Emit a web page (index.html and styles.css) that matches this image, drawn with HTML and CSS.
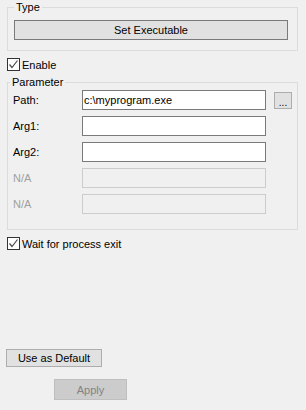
FILE: index.html
```html
<!DOCTYPE html>
<html lang="en">
<head>
  <meta charset="UTF-8">
  <meta name="viewport" content="width=device-width, initial-scale=1.0">
  <title>Run Program</title>
  <link rel="stylesheet" href="styles.css">
</head>
<body>
  <fieldset class="group type-group">
    <legend>Type</legend>
    <button class="btn btn-set">Set Executable</button>
  </fieldset>

  <label class="check check-enable">
    <span class="box"><svg width="11" height="11" viewBox="0 0 11 11"><polyline points="1.5,5.5 4,8.5 9.5,1.5" fill="none" stroke="#4a4a4a" stroke-width="1.2"/></svg></span>
    Enable
  </label>

  <fieldset class="group param-group">
    <legend>Parameter</legend>
    <div class="row">
      <span class="label">Path:</span>
      <input class="field" type="text" value="c:\myprogram.exe">
      <button class="btn btn-browse">...</button>
    </div>
    <div class="row">
      <span class="label">Arg1:</span>
      <input class="field" type="text">
    </div>
    <div class="row">
      <span class="label">Arg2:</span>
      <input class="field" type="text">
    </div>
    <div class="row disabled">
      <span class="label">N/A</span>
      <input class="field" type="text" disabled>
    </div>
    <div class="row disabled">
      <span class="label">N/A</span>
      <input class="field" type="text" disabled>
    </div>
  </fieldset>

  <label class="check check-wait">
    <span class="box"><svg width="11" height="11" viewBox="0 0 11 11"><polyline points="1.5,5.5 4,8.5 9.5,1.5" fill="none" stroke="#4a4a4a" stroke-width="1.2"/></svg></span>
    Wait for process exit
  </label>

  <div class="footer">
    <button class="btn btn-default">Use as Default</button>
    <button class="btn btn-apply" disabled>Apply</button>
  </div>
</body>
</html>
```

FILE: styles.css
```css
body {
  margin: 0;
  padding: 0 0 0 7px;
  width: 306px;
  height: 410px;
  box-sizing: border-box;
  background: #f0f0f0;
  font-family: "Liberation Sans", Arial, sans-serif;
  font-size: 11px;
  color: #000;
}
.group {
  width: 291px;
  box-sizing: border-box;
  margin: 0;
  border: 1px solid #dcdcdc;
}
.group legend {
  line-height: 14px;
  padding: 0 2px;
}
.type-group {
  padding: 0 9px 10px 6px;
}
.param-group {
  margin-top: 4px;
  padding: 1px 0 15px 5px;
}
.param-group legend {
  margin-left: -3px;
}
.btn {
  font-family: inherit;
  font-size: 11px;
  color: #000;
  background: #e1e1e1;
  border: 1px solid #adadad;
  padding: 0;
  margin: 0;
  box-sizing: border-box;
}
.btn-set {
  display: block;
  margin-top: 6px;
  width: 274px;
  height: 20px;
  border-color: #7a7a7a;
}
.check {
  display: flex;
  align-items: center;
  height: 13px;
}
.check-enable {
  margin-top: 7px;
}
.check-wait {
  margin-top: 7px;
}
.box {
  width: 13px;
  height: 13px;
  box-sizing: border-box;
  border: 1px solid #333;
  background: #fff;
  margin-right: 2px;
  display: flex;
  align-items: center;
  justify-content: center;
}
.row {
  display: flex;
  align-items: center;
  height: 20px;
  margin-bottom: 6px;
}
.row:last-child {
  margin-bottom: 0;
}
.label {
  width: 69px;
}
.disabled .label {
  color: #a0a0a0;
}
.field {
  width: 184px;
  height: 20px;
  box-sizing: border-box;
  margin: 0;
  padding: 0 1px;
  border: 1px solid #7a7a7a;
  background: #fff;
  font-family: inherit;
  font-size: 11px;
  color: #000;
  outline: none;
}
.field:disabled {
  border-color: #cccccc;
  background: #f0f0f0;
}
.btn-browse {
  width: 18px;
  height: 17px;
  margin-left: 8px;
  line-height: 20px;
  font-size: 10px;
}
.footer {
  display: flex;
  flex-direction: column;
  align-items: flex-start;
}
.btn-default {
  margin: 99px 0 0 -1px;
  width: 96px;
  height: 18px;
}
.btn-apply {
  margin: 12px 0 0 47px;
  width: 73px;
  height: 21px;
  background: #cccccc;
  border-color: #bfbfbf;
  color: #838383;
}
```
